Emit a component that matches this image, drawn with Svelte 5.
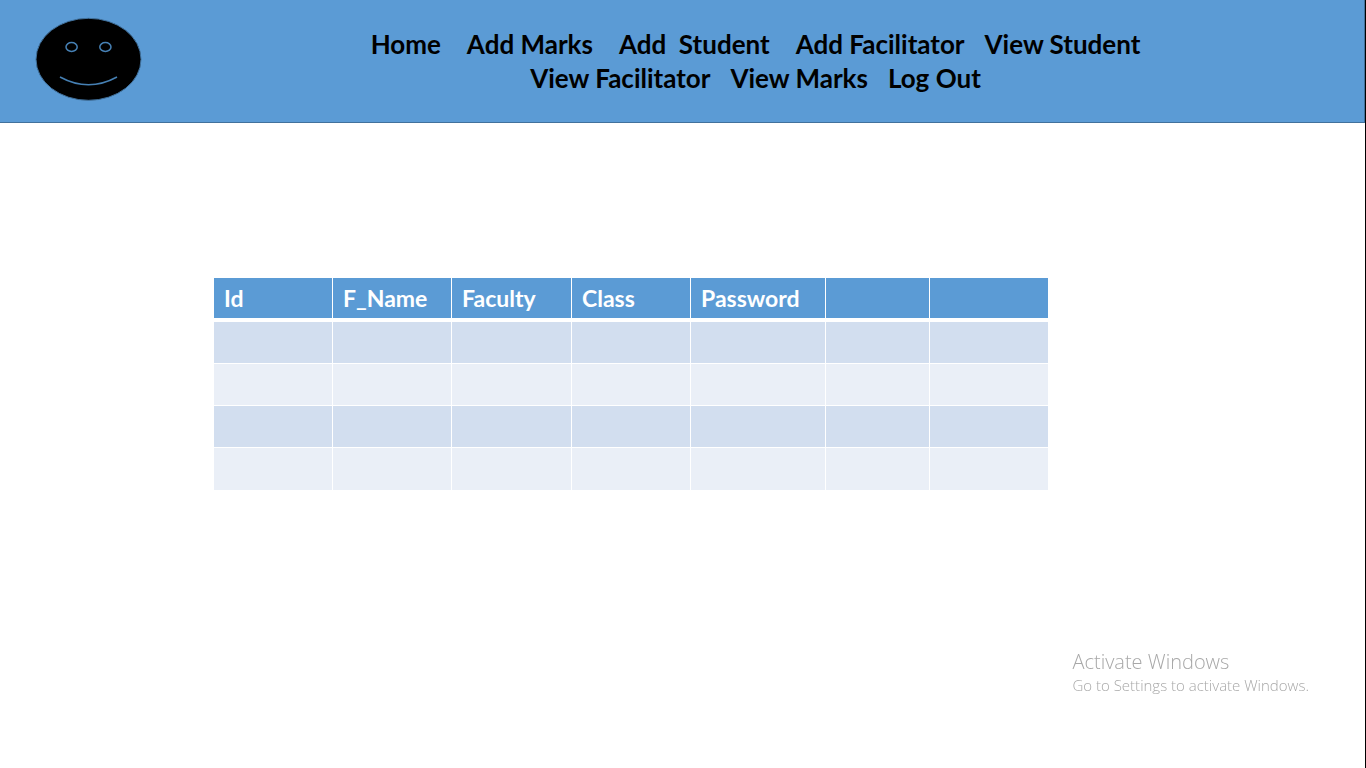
<script>
  const links = [
    { label: 'Home', wide: true },
    { label: 'Add Marks', wide: true },
    { label: 'Add  Student', wide: true },
    { label: 'Add Facilitator' },
    { label: 'View Student' },
    { label: 'View Facilitator' },
    { label: 'View Marks' },
    { label: 'Log Out' }
  ];
  const columns = [
    { label: 'Id', width: 119 },
    { label: 'F_Name', width: 119 },
    { label: 'Faculty', width: 120 },
    { label: 'Class', width: 119 },
    { label: 'Password', width: 135 },
    { label: '', width: 104 },
    { label: '', width: 118 }
  ];
  const rows = [1, 2, 3, 4];
</script>

<div class="page">
  <header>
    <svg class="logo" width="108" height="84" viewBox="0 0 108 84" aria-hidden="true">
      <g stroke="#41719c">
        <ellipse cx="53.5" cy="42.3" rx="52.5" ry="41" fill="#000" />
        <g fill="none" stroke="#4680b4" stroke-width="1.5">
          <ellipse cx="36.6" cy="30" rx="5.6" ry="4.4" />
          <ellipse cx="70.4" cy="30" rx="5.6" ry="4.4" />
          <path d="M25 60Q53.5 75.5 82 60" />
        </g>
      </g>
    </svg>
    <nav>
      {#each links as link}
        <a href="#top" class:wide={link.wide}>{link.label}</a>
      {/each}
    </nav>
  </header>

  <main>
    <table>
      <colgroup>
        {#each columns as column}
          <col style="width: {column.width}px" />
        {/each}
      </colgroup>
      <thead>
        <tr>
          {#each columns as column}
            <th scope="col">{column.label}</th>
          {/each}
        </tr>
      </thead>
      <tbody>
        {#each rows as row}
          <tr>
            {#each columns as column}
              <td></td>
            {/each}
          </tr>
        {/each}
      </tbody>
    </table>
  </main>

  <aside>
    <p class="title">Activate Windows</p>
    <p class="hint">Go to Settings to activate Windows.</p>
  </aside>
</div>

<style>
  :global(body) {
    margin: 0;
    background: #fff;
  }

  .page {
    box-sizing: border-box;
    min-height: 100vh;
    border-right: 1px solid #000;
    font-family: Lato, sans-serif;
  }

  header {
    display: flex;
    align-items: center;
    box-sizing: border-box;
    min-height: 123px;
    padding-left: 35px;
    background: #5b9bd5;
    border: solid #41719c;
    border-width: 0 1px 1px 0;
  }

  .logo {
    flex: none;
    margin-bottom: 4px;
  }

  nav {
    flex: 1;
    display: flex;
    flex-wrap: wrap;
    justify-content: center;
    column-gap: 20px;
    padding: 0 196px 0 200px;
  }

  nav a {
    color: #000;
    font-size: 26px;
    font-weight: 700;
    line-height: 34px;
    text-decoration: none;
    white-space: pre;
  }

  nav a.wide {
    margin-right: 6px;
  }

  main {
    padding: 155px 317px 0 214px;
  }

  table {
    width: 100%;
    table-layout: fixed;
    border-collapse: separate;
    border-spacing: 0;
  }

  th,
  td {
    box-sizing: border-box;
    border-right: 1px solid #fff;
  }

  th:last-child,
  td:last-child {
    border-right: 0;
  }

  th {
    height: 44px;
    padding: 0 0 0 10px;
    border-bottom: 4px solid #fff;
    background: #5b9bd5;
    color: #fff;
    font-size: 23px;
    font-weight: 700;
    line-height: 40px;
    text-align: left;
  }

  td {
    height: 42px;
    padding: 0;
    border-bottom: 1px solid #fff;
    background: #d2deef;
  }

  tbody tr:nth-child(even) td {
    background: #eaeff7;
  }

  tbody tr:last-child td {
    height: 43px;
  }

  aside {
    position: fixed;
    right: 57px;
    bottom: 72px;
    color: #a8a8a8;
    font-family: "Open Sans", sans-serif;
    font-weight: 300;
  }

  aside p {
    margin: 0;
  }

  .title {
    font-size: 20px;
    line-height: 24px;
  }

  .hint {
    font-size: 15px;
    line-height: 22px;
  }
</style>
